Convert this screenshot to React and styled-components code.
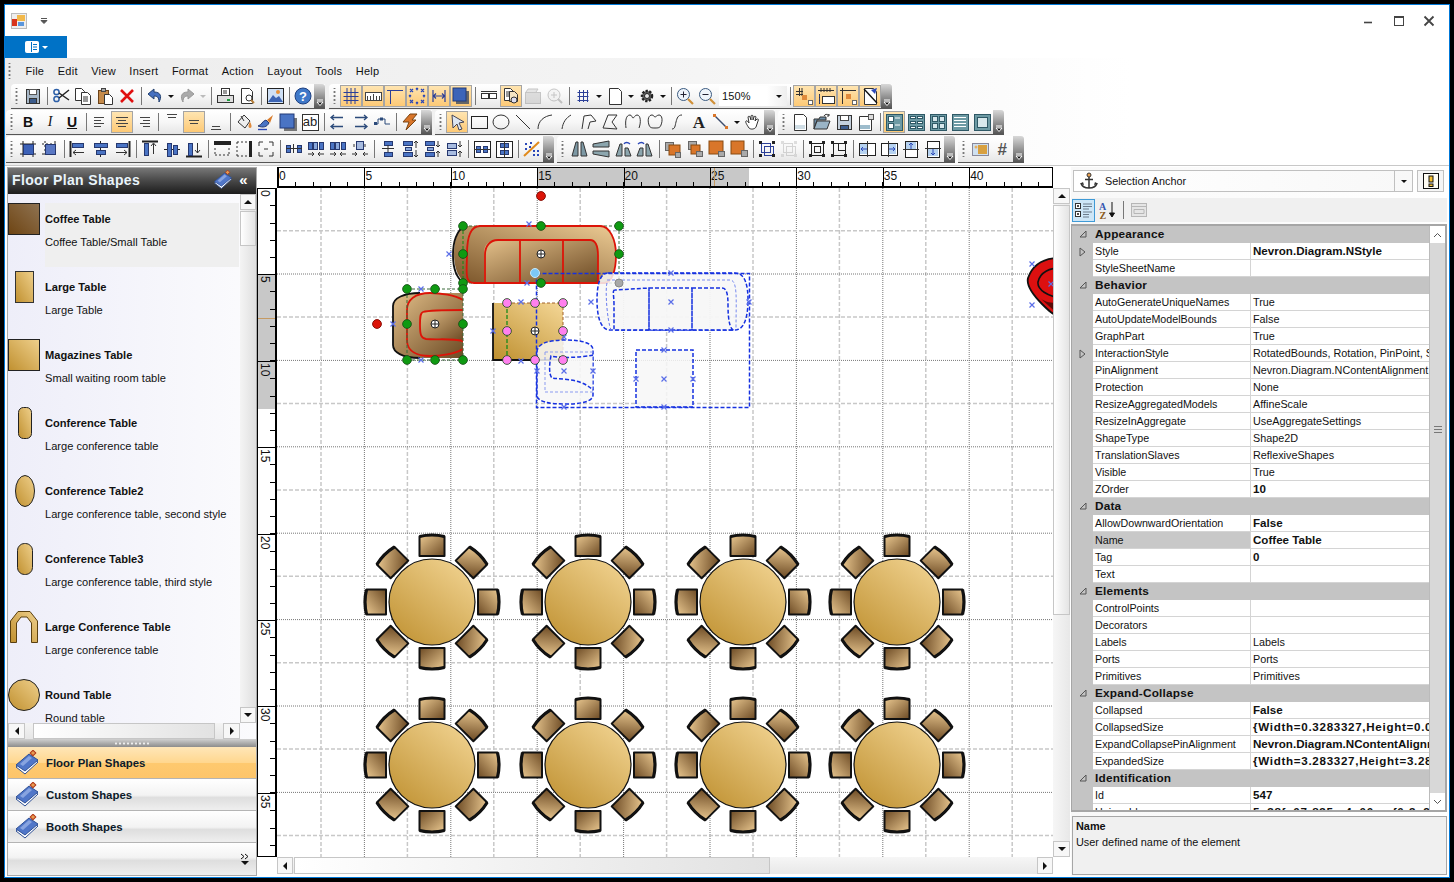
import React from "react";
import styled, { createGlobalStyle } from "styled-components";

const GlobalStyle = createGlobalStyle`
  html, body { margin: 0; padding: 0; background: #000; overflow: hidden; }
  * { box-sizing: border-box; }
  body { font-family: "Liberation Sans", Arial, sans-serif; font-size: 11px; color: #111; }
`;

const Screen = styled.div`
  width: 1454px;
  height: 882px;
  padding: 4px 4px 4px 4px;
  background: #000;
`;

const Frame = styled.div`
  height: 100%;
  display: flex;
  flex-direction: column;
  background: #fff;
  border: 1px solid #0078d7;
`;

const TitleBar = styled.div`
  height: 31px;
  display: flex;
  align-items: center;
  padding: 0 5px 0 6px;
  flex: none;
`;

const WinButtons = styled.div`
  margin-left: auto;
  display: flex;
`;

const WinButton = styled.div`
  width: 30px;
  height: 20px;
  display: flex;
  align-items: center;
  justify-content: center;
`;

const AppTab = styled.div`
  width: 62px;
  height: 22px;
  background: #0072c6;
  display: flex;
  align-items: center;
  justify-content: center;
  gap: 3px;
  flex: none;
`;

const ToolArea = styled.div`
  flex: none;
  height: 108px;
  background: linear-gradient(to right, #ececec, #f4f4f4 45%, #fff 78%);
  border-bottom: 1px solid #c8c8c8;
`;

const MenuBar = styled.div`
  height: 26px;
  display: flex;
  align-items: center;
  gap: 13.5px;
  padding-left: 1px;
  font-size: 11px;
  letter-spacing: 0.25px;
`;

const Grip = styled.span`
  width: ${(p) => p.$w || 10}px;
  height: 16px;
  flex: none;
  background: radial-gradient(circle at 50% 50%, #777 0 1px, transparent 1.2px) center / 3px 4px repeat-y;
`;

const ToolRow = styled.div`
  height: ${(p) => p.$h}px;
  display: flex;
  padding-left: ${(p) => p.$pad}px;
  gap: ${(p) => p.$gap || 3}px;
`;

const Toolbar = styled.div`
  height: calc(100% - 1px);
  display: flex;
  align-items: center;
  background: linear-gradient(to bottom, #fff, #f7f7f7 50%, #e6e6e6);
  border-bottom: 1px solid #555;
  border-radius: 4px 0 0 0;
`;

const Cap = styled.div`
  width: 11px;
  height: 100%;
  flex: none;
  background: linear-gradient(to bottom, #d8d8d8, #555);
  border-radius: 0 3px 0 0;
  display: flex;
  align-items: flex-end;
  justify-content: center;
  padding-bottom: 2px;
`;

const ToolButton = styled.div`
  width: ${(p) => p.$w || 22}px;
  height: 22px;
  flex: none;
  display: flex;
  align-items: center;
  justify-content: center;
  opacity: ${(p) => (p.$off ? 0.45 : 1)};
  ${(p) =>
    p.$on &&
    `background: linear-gradient(to bottom, #ffe6b4, #fdc873);
     box-shadow: inset 0 0 0 1px #a5a5a5;`}
`;

const ToolSep = styled.span`
  width: 6px;
  height: 18px;
  flex: none;
  background: linear-gradient(#777, #777) center / 1px 100% no-repeat;
`;

const CaretBox = styled.span`
  width: ${(p) => p.$w || 10}px;
  flex: none;
  display: flex;
  align-items: center;
  justify-content: center;
  margin-left: ${(p) => p.$ml || 0}px;
  &::before {
    content: "";
    border-left: 3px solid transparent;
    border-right: 3px solid transparent;
    border-top: 3px solid ${(p) => p.$c || "#111"};
  }
`;

const Zoom = styled.div`
  width: 68px;
  height: 20px;
  margin-left: 1px;
  flex: none;
  display: flex;
  align-items: center;
  justify-content: space-between;
  padding: 0 4px 0 3px;
  background: linear-gradient(to right, #fff 70%, #eee);
  letter-spacing: 0.1px;
  font-size: 11px;
`;

const Main = styled.div`
  flex: 1;
  min-height: 0;
  display: flex;
  padding: 1px 2px 1px 2px;
`;

/* left panel */
const LeftPanel = styled.div`
  width: 250px;
  flex: none;
  display: flex;
  flex-direction: column;
  border: 1px solid #aaa;
`;

const PanelHead = styled.div`
  height: 26px;
  flex: none;
  display: flex;
  align-items: center;
  padding: 0 8px 3px 4px;
  background: linear-gradient(to bottom, #777, #4b4b4b 45%, #1c1c1c);
  color: #e9f4fb;
  font-weight: bold;
  font-size: 14px;
  letter-spacing: 0.35px;
  gap: 6px;
`;

const PanelTitle = styled.span`
  flex: 1;
`;

const Chevrons = styled.span`
  color: #fff;
  font-size: 15px;
  line-height: 1;
`;

const ListWrap = styled.div`
  height: 545px;
  flex: none;
  display: grid;
  grid-template-columns: 1fr 16px;
  grid-template-rows: 1fr 16px;
  background: linear-gradient(to right, #eeeef9, #fbfbfd);
`;

const List = styled.div`
  overflow: hidden;
  padding-top: 9px;
`;

const Item = styled.div`
  height: 68px;
  display: flex;
`;

const Thumb = styled.div`
  width: 37px;
  height: 64px;
  flex: none;
  svg {
    display: block;
    margin: -1px 0 0 -1.5px;
  }
`;

const ItemBody = styled.div`
  width: 194px;
  height: 64px;
  padding: 9px 0 0 0;
  background: ${(p) => (p.$sel ? "#efefef" : "transparent")};
`;

const ItemTitle = styled.div`
  font-weight: bold;
  height: 23px;
  line-height: 14px;
  font-size: 11.1px;
`;

const ItemText = styled.div`
  line-height: 14px;
  font-size: 11.1px;
  white-space: nowrap;
`;

const VBar = styled.div`
  display: flex;
  flex-direction: column;
  justify-content: flex-start;
  background: linear-gradient(to right, #f4f4f4, #dfdfdf);
`;

const HBar = styled.div`
  display: flex;
  align-items: stretch;
  background: linear-gradient(to bottom, #f4f4f4, #e6e6e6);
`;

const ArrowBtn = styled.div`
  width: ${(p) => p.$w || 16}px;
  height: ${(p) => p.$h || 16}px;
  flex: none;
  display: flex;
  align-items: center;
  justify-content: center;
  background: #f7f7f7;
  border: 1px solid #c6c6c6;
  margin-top: ${(p) => (p.$end ? "auto" : 0)};
  margin-left: ${(p) => (p.$endX ? "auto" : 0)};
`;

const Tri = styled.span`
  width: 0;
  height: 0;
  border: 4px solid transparent;
  ${(p) => (p.$d === "up" ? "border-bottom: 4px solid #111; border-top: 0;" : "")}
  ${(p) => (p.$d === "down" ? "border-top: 4px solid #111; border-bottom: 0;" : "")}
  ${(p) => (p.$d === "left" ? "border-right: 4px solid #111; border-left: 0;" : "")}
  ${(p) => (p.$d === "right" ? "border-left: 4px solid #111; border-right: 0;" : "")}
`;

const VThumb = styled.div`
  height: ${(p) => p.$h}px;
  flex: none;
  margin-top: 1px;
  background: linear-gradient(to right, #fff, #e4e4e4);
  border: 1px solid #c6c6c6;
`;

const HThumb = styled.div`
  width: ${(p) => p.$w}px;
  flex: none;
  margin-left: ${(p) => p.$ml || 1}px;
  background: linear-gradient(to right, #fff, #e2e2e2);
  border: 1px solid #c6c6c6;
`;

const Splitter = styled.div`
  height: 8px;
  flex: none;
  display: flex;
  align-items: center;
  justify-content: center;
  background: linear-gradient(to bottom, #d0d0d0, #8c8c8c);
  &::before {
    content: "";
    width: 36px;
    height: 3px;
    background: radial-gradient(circle, #eee 0 1px, transparent 1.2px) 0 0 / 4px 3px repeat-x;
  }
`;

const NavButton = styled.div`
  height: 32px;
  flex: none;
  display: flex;
  align-items: center;
  padding-left: 6px;
  gap: 6px;
  font-weight: bold;
  font-size: 11.4px;
  color: #0c1a2a;
  border-bottom: 1px solid #b4b4b4;
  background: ${(p) =>
    p.$on
      ? "linear-gradient(to bottom, #ffe6b8, #ffd78f 50%, #e9a95a 50%, #fec96f 53%, #fdc56a)"
      : "linear-gradient(to bottom, #fff, #f3f3f3 52%, #dedede 60%, #efefef)"};
`;

const NavFoot = styled.div`
  flex: 1;
  display: flex;
  justify-content: flex-end;
  align-items: flex-end;
  padding: 0 6px 10px 0;
  background: linear-gradient(to bottom, #fff, #f3f3f3 45%, #dedede 55%, #efefef);
`;

/* center */
const Center = styled.div`
  width: 813px;
  flex: none;
  display: grid;
  grid-template-columns: 20px 776px 17px;
  grid-template-rows: 21px 669px 17px;
`;

const TopRuler = styled.div`
  grid-column: 2;
  display: flex;
  overflow: hidden;
  border: 1px solid #000;
  border-bottom-width: 2px;
`;

const SideRuler = styled.div`
  grid-column: 1;
  display: flex;
  flex-direction: column;
  overflow: hidden;
  border: 1px solid #000;
  border-right-width: 2px;
  border-top: 0;
`;

const TopCell = styled.div`
  width: 86.4px;
  flex: none;
  position: relative;
  border-left: 1px solid #000;
  padding-left: 0;
  line-height: 16px;
  font-size: 12px;
  background:
    repeating-linear-gradient(to right, transparent 0 16.3px, #000 16.3px 17.28px) left bottom / 100% 4px no-repeat,
    linear-gradient(to right, #c8c8c8 ${(p) => p.$fill || 0}%, #fff ${(p) => p.$fill || 0}%);
`;

const SideCell = styled.div`
  height: 86.4px;
  flex: none;
  position: relative;
  border-top: 1px solid #000;
  writing-mode: vertical-rl;
  padding: 1px 4px 0 0;
  line-height: 12px;
  font-size: 12px;
  background:
    repeating-linear-gradient(to bottom, transparent 0 16.3px, #000 16.3px 17.28px) right top / 5px 100% no-repeat,
    linear-gradient(to bottom, #c8c8c8 ${(p) => p.$fill || 0}%, #fff ${(p) => p.$fill || 0}%);
`;

const TopMark = styled.i`
  position: absolute;
  top: 0;
  bottom: 0;
  left: ${(p) => p.$at}px;
  width: 1px;
  background: #c59a62;
`;

const SideMark = styled.i`
  position: absolute;
  left: 0;
  right: 0;
  top: ${(p) => p.$at}px;
  height: 1px;
  background: #c59a62;
`;

const Canvas = styled.div`
  grid-column: 2;
  background: #fff;
  overflow: hidden;
  svg { display: block; }
`;

const BarV = styled.div`
  grid-column: 3;
  display: flex;
  flex-direction: column;
  background: linear-gradient(to right, #f6f6f6, #e8e8e8);
`;

const BarH = styled.div`
  grid-column: 2;
  display: flex;
  background: linear-gradient(to bottom, #f6f6f6, #e8e8e8);
`;

/* right panel */
const RightPanel = styled.div`
  width: 378px;
  flex: none;
  margin-left: 1px;
  display: flex;
  flex-direction: column;
  padding: 3px 2px 1px 0;
  background: linear-gradient(to right, #f8f8f8, #fff);
`;

const Selector = styled.div`
  display: flex;
  gap: 4px;
  padding-left: 2px;
  height: 22px;
  flex: none;
`;

const Combo = styled.div`
  flex: 1;
  display: flex;
  align-items: center;
  border: 1px solid #c0c0c0;
  background: linear-gradient(to right, #fff, #f8f8f8);
  padding-left: 6px;
  font-size: 10.8px;
`;

const ComboText = styled.span`
  margin-left: 7px;
`;

const ComboArrow = styled.span`
  margin-left: auto;
  width: 18px;
  height: 100%;
  border-left: 1px solid #c0c0c0;
  display: flex;
  align-items: center;
  justify-content: center;
`;

const WarnBtn = styled.div`
  width: 27px;
  border: 1px solid #c0c0c0;
  margin-right: 3px;
  background: #f6f6f6;
  display: flex;
  align-items: center;
  justify-content: center;
`;

const GridTools = styled.div`
  height: 24px;
  margin: 6px 0 2px 1px;
  flex: none;
  display: flex;
  align-items: center;
  gap: 1px;
  background: #f0f0f0;
`;

const GridToolBtn = styled.div`
  width: 23px;
  height: 23px;
  display: flex;
  align-items: center;
  justify-content: center;
  opacity: ${(p) => (p.$off ? 0.55 : 1)};
  ${(p) => p.$on && "background:#cde6f7; border:1px solid #3f9ad6;"}
`;

const PropGrid = styled.div`
  height: 588px;
  flex: none;
  display: flex;
  border: 2px solid #a6a6a6;
  border-width: 2px 2px 2px 1px;
  overflow: hidden;
  background: #c4c4c4;
`;

const PropRows = styled.div`
  width: 357px;
  flex: none;
  overflow: hidden;
`;

const CatRow = styled.div`
  height: 17px;
  display: flex;
  align-items: center;
  padding-bottom: 2px;
  background: #c4c4c4;
  font-weight: bold;
  font-size: 11.8px;
  letter-spacing: 0.2px;
`;

const CatLabel = styled.span`
  padding-left: 2px;
`;

const Gutter = styled.span`
  width: 21px;
  flex: none;
  height: 100%;
  display: flex;
  align-items: center;
  justify-content: center;
`;

const PropRow = styled.div`
  height: 17px;
  display: flex;
  background: #c4c4c4;
`;

const PropName = styled.div`
  width: 158px;
  flex: none;
  padding-left: 2px;
  line-height: 17px;
  font-size: 10.7px;
  white-space: nowrap;
  overflow: hidden;
  background: ${(p) => (p.$sel ? "#c8c8c8" : "#fff")};
  border-right: 1px solid #d4d4d4;
  border-bottom: 1px solid #d4d4d4;
`;

const PropValue = styled.div`
  flex: 1;
  min-width: 0;
  padding-left: 2px;
  line-height: ${(p) => (p.$b ? 16 : 17)}px;
  font-size: ${(p) => (p.$b ? 11.6 : 10.8)}px;
  font-weight: ${(p) => (p.$b ? "bold" : "normal")};
  letter-spacing: ${(p) => (p.$wide ? "0.7px" : "0")};
  white-space: nowrap;
  overflow: hidden;
  background: #fff;
  border-bottom: 1px solid #d4d4d4;
`;

const GridScroll = styled.div`
  flex: 1;
  display: flex;
  flex-direction: column;
  background: #d8d8d8;
  border-left: 1px solid #bbb;
`;

const ChevBtn = styled.div`
  height: 17px;
  flex: none;
  background: #fff;
  display: flex;
  align-items: center;
  justify-content: center;
  margin-top: ${(p) => (p.$end ? "auto" : 0)};
`;

const GridGrip = styled.div`
  margin: 183px auto 0;
  width: 8px;
  height: 7px;
  border-top: 1px solid #777;
  border-bottom: 1px solid #777;
  background: linear-gradient(#777, #777) center / 100% 1px no-repeat;
`;

const HelpPane = styled.div`
  flex: 1;
  margin: 4px 0 0 1px;
  background: #f0f0f0;
  border: 1px solid #a6a6a6;
  padding: 1px 3px;
  line-height: 16px;
  font-size: 10.9px;
`;

const HelpTitle = styled.div`
  font-weight: bold;
`;

/* icons are drawn on an 18x18 box */
const L = ({ d, c = "#333", w = 1, dash }) => (
  <path d={d} stroke={c} strokeWidth={w} strokeDasharray={dash} fill="none" />
);
const R = ({ x, y, w, h, f = "#4a74c4", c = "#26386f" }) => (
  <rect x={x + 0.5} y={y + 0.5} width={w} height={h} fill={f} stroke={c} />
);
const Page = ({ x = 3, y = 1, w = 11, h = 15, f = "#fff" }) => (
  <path d={`M${x + 0.5} ${y + 0.5}h${w - 3}l3 3v${h - 3}h-${w}z`} fill={f} stroke="#333" />
);
const HS = "M3.5 5.5h11M3.5 9.5h11M3.5 13.5h11M5.5 3v12M9.5 3v12M13.5 3v12";
const CORNERS = "M1 1h3v3H1zM14 1h3v3h-3zM1 14h3v3H1zM14 14h3v3h-3z";

const ICONS = {
  save: <><R x={2} y={2} w={13} h={14} f="#a8b8c8" c="#333" /><R x={5} y={2} w={7} h={5} f="#fff" c="#555" /><R x={5} y={11} w={7} h={5} f="#3c5c8c" c="#333" /></>,
  cut: <><circle cx="4.5" cy="12" r="2.6" fill="none" stroke="#2c5fa8" strokeWidth="1.5" /><circle cx="4.5" cy="5" r="2.6" fill="none" stroke="#2c5fa8" strokeWidth="1.5" /><L d="M7 6L17 13M7 11L17 3" c="#222" w="1.5" /></>,
  copy: <><Page x={1} y={1} w={9} h={12} /><Page x={7} y={5} w={9} h={12} /><L d="M9 10h5M9 12h5M9 14h5" /></>,
  paste: <><R x={2} y={3} w={10} h={13} f="#c48a4a" c="#6b4218" /><R x={5} y={1} w={4} h={3} f="#aaa" c="#444" /><Page x={8} y={7} w={8} h={10} /></>,
  del: <L d="M3 3L15 15M15 3L3 15" c="#e01010" w="2.6" />,
  undo: <path d="M8 2L2 7l6 5V9c3 0 5 1 5 6 3-5 2-10-5-10z" fill="#4670c0" stroke="#22406f" />,
  redo: <path d="M10 2l6 5-6 5V9c-3 0-5 1-5 6-3-5-2-10 5-10z" fill="#aaa" stroke="#999" />,
  print: <><R x={5} y={1} w={8} h={7} f="#fff" c="#333" /><R x={1} y={8} w={16} h={7} f="#ddd" c="#333" /><rect x="11" y="12" width="3" height="2" fill="#1ca03c" /><L d="M7 4h4M7 6h4" /></>,
  preview: <><Page x={3} y={1} w={11} h={15} /><circle cx="11" cy="11" r="3" fill="#fff" stroke="#333" /><L d="M13 13l3 3" c="#b8803a" w="2" /></>,
  picture: <><R x={1} y={1} w={16} h={15} f="#cfe0f5" c="#222" /><circle cx="12" cy="5" r="2" fill="#e8923a" /><path d="M2 15l5-7 3 3 3-2 4 6z" fill="#3c64b4" /></>,
  help: <><circle cx="9" cy="9" r="8" fill="#3f78c8" stroke="#1d3f80" /><text x="9" y="13.5" textAnchor="middle" fill="#fff" fontWeight="bold" fontSize="13" fontFamily="Liberation Sans">?</text></>,
  grid: <L d="M1.5 5.5h15M1.5 9.5h15M1.5 13.5h15M5 1v16M9 1v16M13 1v16" c="#2b3f98" />,
  ruler: <><R x={1} y={5} w={16} h={8} f="#fff" c="#444" /><L d="M3.5 13V9M6.5 13V9M9.5 13V7M12.5 13V9M15.5 13V9" c="#444" /></>,
  guides: <L d="M1 3.5h16M4.5 3v14" c="#2b3f98" />,
  snap: <path d="M2 2l3 3M5 2L2 5M13 2l3 3M16 2l-3 3M2 13l3 3M5 13l-3 3M13 13l3 3M16 13l-3 3M8 1l2 2M10 1L8 3M8 15l2 2M10 15l-2 2M1 8l2 2M3 8l-2 2M15 8l2 2M17 8l-2 2" stroke="#2b48b8" fill="none" strokeWidth="1.2" />,
  arrows: <L d="M3 3v12M15 3v12M3.5 9h11M6 6.5L3.5 9 6 11.5M12 6.5l2.5 2.5-2.5 2.5" c="#2b3f98" w="1.2" />,
  shadow: <><rect x="4" y="4" width="13" height="13" fill="#666" /><rect x="1" y="1" width="13" height="13" fill="#3c64b8" stroke="#223a78" /></>,
  rects: <><R x={1} y={6} w={7} h={5} f="#fff" c="#333" /><R x={9} y={6} w={7} h={5} f="#fff" c="#333" /><L d="M1 4.5h16" /></>,
  pagezoom: <><Page x={2} y={1} w={9} h={12} /><L d="M4 5h5M4 7h5M4 9h5" /><Page x={7} y={4} w={8} h={10} f="#f4e4c4" /><circle cx="12" cy="13" r="3" fill="#dde" stroke="#333" /></>,
  offpage: <><R x={1} y={5} w={15} h={11} f="#bbb" c="#888" /><path d="M2 5l2-3h10l-2 3" fill="#ccc" stroke="#888" /></>,
  offzoom: <><circle cx="8" cy="8" r="6" fill="#eee" stroke="#888" /><L d="M5 8h6M8 5v6" c="#888" /><L d="M12 12l4 4" c="#888" w="2" /></>,
  hash: <L d={HS} c="#2b3f98" />,
  page: <Page x={3} y={1} w={12} h={16} />,
  gear: <><circle cx="9" cy="9" r="5" fill="#666" stroke="#222" strokeWidth="2.5" strokeDasharray="2.2 1.4" /><circle cx="9" cy="9" r="2.5" fill="#e8e8e8" stroke="#222" /></>,
  zin: <><circle cx="7.5" cy="7.5" r="6" fill="#eef4fb" stroke="#3a5a80" /><L d="M4.5 7.5h6M7.5 4.5v6" c="#223" /><L d="M12 12l5 5" c="#d09038" w="2.2" /></>,
  zout: <><circle cx="7.5" cy="7.5" r="6" fill="#eef4fb" stroke="#3a5a80" /><L d="M4.5 7.5h6" c="#223" /><L d="M12 12l5 5" c="#d09038" w="2.2" /></>,
  v1: <><L d="M1 4.5h7M4.5 1v8M1 7.5h7M7 1v8" c="#333" /><rect x="7" y="8" width="5" height="5" fill="#e08a3c" /><R x={13} y={13} w={4} h={4} f="#fff" c="#666" /></>,
  v2: <><L d="M1 3.5h16M4 1v4M7 1v4M10 1v4M13 1v4M2.5 7v10" c="#333" /><L d="M2 9h1M2 12h1M2 15h1" c="#2b48b8" /><R x={5} y={9} w={12} h={7} f="#fff" c="#333" /></>,
  v3: <><L d="M1 3.5h16M3.5 1v16" c="#333" /><rect x="7" y="7" width="5" height="5" fill="#e08a3c" /><R x={13} y={13} w={4} h={4} f="#fff" c="#666" /></>,
  v4: <><Page x={3} y={1} w={12} h={16} /><L d="M3 2l13 14" c="#111" w="1.4" /><path d="M10 3l6-2-2 6z" fill="#2b48b8" /></>,
  alignL: <L d="M3 4.5h10M3 7.5h7M3 10.5h10M3 13.5h7" c="#444" />,
  alignC: <L d="M3 4.5h12M5 7.5h8M3 10.5h12M5 13.5h8" c="#444" />,
  alignR: <L d="M5 4.5h10M8 7.5h7M5 10.5h10M8 13.5h7" c="#444" />,
  vTop: <L d="M4 1.5h10M5 4.5h8" c="#444" />,
  vMid: <L d="M4 7.5h10M5 10.5h8" c="#444" />,
  vBot: <L d="M5 13.5h8M4 16.5h10" c="#444" />,
  fill: <><path d="M3 9l6-7 6 6-5 7z" fill="#eee" stroke="#333" /><path d="M15 9c2 3 2 6 0 6s-2-3 0-6z" fill="#e08a3c" /><L d="M6 3l3 5" /></>,
  pen: <><path d="M1 13c4-1 4-5 8-6l3 3c-2 4-6 5-11 3z" fill="#4a74c4" stroke="#26386f" /><path d="M10 7l6-5-3 8z" fill="#d87c2c" /><L d="M1 16.5h9" c="#2b48b8" w="1.4" /></>,
  shadow2: <><rect x="5" y="5" width="13" height="13" fill="#777" /><rect x="1" y="1" width="14" height="14" fill="#4a74c4" stroke="#223a78" /></>,
  ab: <><R x={1} y={1} w={16} h={16} f="#fff" c="#333" /><text x="9" y="13" textAnchor="middle" fontSize="13" fontFamily="Liberation Sans" fill="#222">ab</text></>,
  arrowsL: <L d="M2 4.5h12M2 13.5h12M5 2L2 4.5 5 7M5 11l-3 2.5L5 16" c="#2b4a7a" w="1.3" />,
  arrowsR: <L d="M4 4.5h12M4 13.5h12M13 2l3 2.5L13 7M13 11l3 2.5L13 16" c="#2b4a7a" w="1.3" />,
  conn: <><L d="M1 11h4V6h7v5h5" c="#2b4a7a" /><rect x="1" y="9" width="3" height="3" fill="#2b4a7a" /><rect x="7" y="4.5" width="3" height="3" fill="#2b4a7a" /></>,
  bolt: <path d="M9 1h7l-5 6h4L5 17l3-8H2z" fill="#d9762a" stroke="#7a4412" />,
  pointer: <path d="M4 2l12 7-5 1 3 6-3 1-2-6-4 4z" fill="#dde6f2" stroke="#445" />,
  rect: <R x={1} y={3} w={16} h={12} f="none" c="#222" />,
  ellipse: <ellipse cx="9" cy="9" rx="8" ry="7" fill="none" stroke="#333" />,
  line: <L d="M2 2L16 16" />,
  arc1: <L d="M2 16C2 8 8 3 16 2" />,
  arc2: <L d="M4 16C5 9 8 5 13 2" />,
  poly1: <L d="M2 16L4 3 11 2 16 8 10 9 8 16" />,
  poly2: <L d="M1 15L6 2 15 2 10 9 15 16z" />,
  curve1: <L d="M2 15C1 8 2 2 6 2c2 0 2 3 3 3s2-3 4-3c4 0 4 8 2 13" />,
  curve2: <L d="M3 12C1 6 3 2 6 2c2 0 2 2 3 2s2-2 4-2c3 0 4 5 2 10-1 3-3 3-6 3s-5 0-6-3z" />,
  bezier: <L d="M4 16c3 0 3-3 4-7s2-7 6-7" />,
  letterA: <text x="9" y="15" textAnchor="middle" fontSize="17" fontWeight="bold" fontFamily="Liberation Serif" fill="#222">A</text>,
  connector: <><L d="M3 3L15 15" c="#3c4c6c" w="1.4" /><rect x="1" y="1" width="3" height="3" fill="#d9762a" /><rect x="13" y="13" width="3" height="3" fill="#d9762a" /></>,
  hand: <path d="M5 15C3 12 1 9 2 8s2 1 3 2L4 4c0-1 2-1 2 0l1 3V3c0-1 2-1 2 0v4l1-3c0-1 2-1 2 0l-1 4 2-2c1 0 2 0 1 2l-2 6c-1 2-5 3-7 1z" fill="#fff" stroke="#333" />,
  newPage: <><Page x={3} y={1} w={12} h={16} f="#fff" /><rect x="4" y="12" width="10" height="4" fill="#cfdde5" /></>,
  open: <><path d="M1 6h5l1-2h6v3H4L1 16z" fill="#6d8ea8" stroke="#333" /><path d="M4 8h13l-3 8H1z" fill="#9ab4c6" stroke="#333" /><L d="M11 3c1-2 3-2 5-1M16 1v2h-2" /></>,
  savePage: <><R x={2} y={2} w={14} h={14} f="#c4d0dc" c="#333" /><R x={5} y={2} w={8} h={5} f="#fff" c="#444" /><R x={5} y={12} w={8} h={4} f="#3c5c8c" c="#333" /></>,
  pageX: <><Page x={2} y={3} w={12} h={14} /><rect x="3" y="12" width="10" height="4" fill="#9dbccc" /><R x={11} y={1} w={5} h={5} f="#ddd" c="#555" /></>,
  view1: <><R x={1} y={1} w={16} h={16} f="#6d9aa4" c="#2f5966" /><R x={3} y={3} w={5} h={5} f="#fff" c="#2f5966" /><R x={3} y={10} w={5} h={5} f="#fff" c="#2f5966" /><L d="M10 5h5M10 12h5" c="#fff" /></>,
  view2: <><R x={1} y={1} w={16} h={16} f="#6d9aa4" c="#2f5966" /><R x={3} y={3} w={5} h={2} f="#fff" c="#2f5966" /><R x={10} y={3} w={5} h={2} f="#fff" c="#2f5966" /><R x={3} y={8} w={5} h={2} f="#fff" c="#2f5966" /><R x={10} y={8} w={5} h={2} f="#fff" c="#2f5966" /><R x={3} y={13} w={5} h={2} f="#fff" c="#2f5966" /><R x={10} y={13} w={5} h={2} f="#fff" c="#2f5966" /></>,
  view3: <><R x={1} y={1} w={16} h={16} f="#6d9aa4" c="#2f5966" /><R x={3} y={3} w={5} h={5} f="#d8e8ec" c="#2f5966" /><R x={10} y={3} w={5} h={5} f="#d8e8ec" c="#2f5966" /><R x={3} y={10} w={5} h={5} f="#d8e8ec" c="#2f5966" /><R x={10} y={10} w={5} h={5} f="#d8e8ec" c="#2f5966" /></>,
  view4: <><R x={1} y={1} w={16} h={16} f="#6d9aa4" c="#2f5966" /><L d="M3 4.5h12M3 7.5h12M3 10.5h12M3 13.5h12" c="#fff" /></>,
  view5: <><R x={1} y={1} w={16} h={16} f="#6d9aa4" c="#2f5966" /><R x={4} y={4} w={10} h={10} f="#d8e8ec" c="#2f5966" /></>,
  sizeA: <><L d="M1 4h16M1 14h16M4 1v16M14 1v16" c="#222" /><R x={4} y={4} w={10} h={10} f="#3d62b8" /></>,
  sizeB: <><L d="M1 4h16M1 14h16M4 1v16M14 1v16" c="#222" dash="2" /><R x={4} y={4} w={10} h={10} f="#5a78c4" /></>,
  alL: <><L d="M1.5 1v16" c="#222" w="2" /><R x={3} y={3} w={11} h={4} /><L d="M15 12.5H4M7 10l-3 2.5L7 15" /></>,
  alC: <><L d="M9.5 1v16" c="#222" /><R x={3} y={3} w={13} h={4} /><R x={5} y={10} w={9} h={4} /></>,
  alR: <><L d="M16.5 1v16" c="#222" w="2" /><R x={3} y={3} w={11} h={4} /><L d="M3 12.5h11M11 10l3 2.5-3 2.5" /></>,
  alT: <><L d="M1 1.5h16" c="#222" w="2" /><R x={3} y={3} w={4} h={12} /><L d="M12.5 4v10M10 6l2.5-3L15 6" /></>,
  alM: <><L d="M1 9.5h16" c="#222" /><R x={4} y={3} w={4} h={13} /><R x={10} y={5} w={4} h={9} /></>,
  alB: <><L d="M1 16.5h16" c="#222" w="2" /><R x={3} y={3} w={4} h={12} /><L d="M12.5 3v10M10 10l2.5 3 2.5-3" /></>,
  dsT: <><R x={1} y={1} w={16} h={3} f="#222" c="#222" /><L d="M2 15h14M2 8v7M16 8v7" c="#333" dash="2" /></>,
  dsM: <><L d="M2 2h10M2 2v14M2 16h10" c="#333" dash="2" /><rect x="14" y="1" width="3" height="16" fill="#222" /></>,
  dsB: <L d="M2 2h4M12 2h4M2 2v4M16 2v4M2 16h4M12 16h4M2 12v4M16 12v4M7 9h4" c="#333" />,
  spA: <><R x={1} y={5} w={4} h={7} /><R x={12} y={5} w={4} h={7} /><L d="M1 8.5h16M8.5 4v9" /></>,
  spB: <><R x={1} y={2} w={4} h={7} /><R x={12} y={2} w={4} h={7} /><R x={6} y={2} w={4} h={7} f="#8aa8dc" /><L d="M1 14h6M5 12l2 2-2 2M11 14h6M13 12l-2 2 2 2" /></>,
  spC: <><R x={1} y={2} w={4} h={7} /><R x={12} y={2} w={4} h={7} /><R x={6} y={2} w={4} h={7} f="#8aa8dc" /><L d="M1 14h6M5 12l2 2-2 2M17 14h-6M13 12l-2 2 2 2" /></>,
  spD: <><R x={5} y={1} w={7} h={8} f="#a8bce0" /><L d="M3 4v3M14 4v3" /><L d="M1 14h5M4 12l2 2-2 2M17 14h-5M14 12l-2 2 2 2" /></>,
  vsA: <><R x={5} y={1} w={8} h={4} /><R x={5} y={12} w={8} h={4} /><L d="M3 8.5h12M9 5v7" /></>,
  vsB: <><R x={2} y={1} w={9} h={4} /><R x={2} y={12} w={9} h={4} /><R x={4} y={7} w={6} h={3} f="#8aa8dc" /><L d="M15 1v7M13 3l2-2 2 2M15 10v7M13 15l2 2 2-2" /></>,
  vsC: <><R x={2} y={1} w={9} h={4} /><R x={2} y={12} w={9} h={4} /><R x={4} y={7} w={6} h={3} f="#8aa8dc" /><L d="M15 1v6M13 5l2 2 2-2M15 17v-6M13 13l2-2 2 2" /></>,
  vsD: <><R x={2} y={3} w={9} h={5} f="#a8bce0" /><R x={2} y={10} w={9} h={5} f="#a8bce0" /><L d="M15 1v6M13 5l2 2 2-2M15 17v-6M13 13l2-2 2 2" /></>,
  frA: <><R x={1} y={1} w={16} h={16} f="#fff" c="#222" /><R x={3} y={6} w={4} h={6} /><R x={10} y={6} w={4} h={6} /><L d="M1 9.5h16" /></>,
  frB: <><R x={1} y={1} w={16} h={16} f="#fff" c="#222" /><R x={5} y={3} w={8} h={4} /><R x={5} y={10} w={8} h={4} /><L d="M9.5 1v16" /></>,
  magic: <><L d="M1 16L16 2" c="#e08a1c" w="2" /><path d="M2 3h2v2H2zM7 2h2v2H7zM2 8h2v2H2zM10 10h2v2h-2zM14 10h2v2h-2zM10 14h2v2h-2zM14 14h2v2h-2zM6 6h2v2H6z" fill="#2b48b8" /></>,
  trA: <path d="M6 2L2 16h6V2zM11 2v14h6L13 2z" fill="#7c98a4" stroke="#333" />,
  trB: <path d="M1 4L17 1v6H1zM1 11h16v6L1 14z" fill="#8ca6ae" stroke="#333" />,
  trC: <><path d="M6 4L2 16h6V4zM11 8v8h6l-3-8z" fill="#8ca6ae" stroke="#333" /><L d="M10 4c1-2 4-2 6 0" c="#2b48b8" w="1.3" /></>,
  trD: <><path d="M12 4l4 12h-6V4zM7 8v8H1l3-8z" fill="#8ca6ae" stroke="#333" /><L d="M8 4c-1-2-4-2-6 0" c="#2b48b8" w="1.3" /></>,
  ordA: <><R x={1} y={2} w={8} h={8} f="#aaa" c="#666" /><rect x="5" y="5" width="11" height="10" fill="#d9762a" stroke="#884a10" /><R x={11} y={12} w={5} h={5} f="#aaa" c="#666" /></>,
  ordB: <><R x={2} y={1} w={8} h={8} f="#aaa" c="#666" /><rect x="5" y="5" width="9" height="9" fill="#d9762a" stroke="#884a10" /><R x={10} y={11} w={6} h={5} f="#aaa" c="#666" /></>,
  ordC: <><rect x="1" y="1" width="14" height="13" fill="#d9762a" stroke="#884a10" /><R x={10} y={11} w={6} h={5} f="#aaa" c="#666" /></>,
  ordD: <><rect x="1" y="1" width="13" height="13" fill="#d9762a" stroke="#884a10" /><R x={11} y={10} w={6} h={6} f="#aaa" c="#666" /></>,
  grpA: <><R x={3} y={3} w={9} h={9} f="none" c="#2b3f98" /><R x={6} y={6} w={9} h={9} f="none" c="#2b3f98" /><path d={CORNERS} fill="#222" /></>,
  grpB: <><R x={3} y={3} w={9} h={9} f="none" c="#aaa" /><R x={6} y={6} w={9} h={9} f="none" c="#aaa" /><path d={CORNERS} fill="#bbb" /></>,
  bxA: <><R x={3} y={3} w={12} h={12} f="none" c="#222" /><R x={6} y={6} w={6} h={6} f="none" c="#222" /><path d={CORNERS} fill="#222" /></>,
  bxB: <><R x={3} y={3} w={12} h={12} f="none" c="#222" /><R x={8} y={3} w={7} h={7} f="none" c="#222" /><path d={CORNERS} fill="#222" /></>,
  edL: <><R x={1} y={3} w={16} h={12} f="#fff" c="#222" /><rect x="2" y="4" width="7" height="10" fill="#b6d2f0" /><L d="M9 9H3M5 7L3 9l2 2" c="#2b48b8" /><L d="M9.5 1v16" c="#333" /></>,
  edR: <><R x={1} y={3} w={16} h={12} f="#fff" c="#222" /><rect x="9" y="4" width="7" height="10" fill="#b6d2f0" /><L d="M9 9h6M13 7l2 2-2 2" c="#2b48b8" /><L d="M8.5 1v16" c="#333" /></>,
  edT: <><R x={3} y={1} w={12} h={16} f="#fff" c="#222" /><rect x="4" y="2" width="10" height="7" fill="#b6d2f0" /><L d="M9 9V3M7 5l2-2 2 2" c="#2b48b8" /><L d="M1 9.5h16" c="#333" /></>,
  edB: <><R x={3} y={1} w={12} h={16} f="#fff" c="#222" /><rect x="4" y="9" width="10" height="7" fill="#b6d2f0" /><L d="M9 9v6M7 13l2 2 2-2" c="#2b48b8" /><L d="M1 8.5h16" c="#333" /></>,
  photo: <><R x={1} y={3} w={16} h={12} f="#cfe0f0" c="#889" /><rect x="7" y="5" width="9" height="9" fill="#d8a040" /><circle cx="5" cy="7" r="1.5" fill="#e8b060" /></>,
  pound: <text x="9" y="15" textAnchor="middle" fontSize="17" fontWeight="bold" fontStyle="italic" fontFamily="Liberation Sans" fill="#555">#</text>,
};

const Glyph = ({ name, size = 18 }) => (
  <svg width={size} height={size} viewBox="0 0 18 18">{ICONS[name]}</svg>
);

const BIU = styled.span`
  font-family: ${(p) => (p.$serif ? '"Liberation Serif", serif' : '"Liberation Sans", sans-serif')};
  font-weight: ${(p) => (p.$b ? "bold" : "normal")};
  font-style: ${(p) => (p.$i ? "italic" : "normal")};
  text-decoration: ${(p) => (p.$u ? "underline" : "none")};
  font-size: 14px;
`;

const renderItem = (it, i) => {
  if (it === "|") return <ToolSep key={i} />;
  if (it === "v") return <CaretBox key={i} />;
  if (it === "vd") return <CaretBox key={i} $c="#bbb" />;
  if (it === "B") return <ToolButton key={i}><BIU $b>B</BIU></ToolButton>;
  if (it === "I") return <ToolButton key={i}><BIU $i $serif>I</BIU></ToolButton>;
  if (it === "U") return <ToolButton key={i}><BIU $u $b>U</BIU></ToolButton>;
  if (it === "zoom") return <Zoom key={i}><span>150%</span><CaretBox $w={8} /></Zoom>;
  const [name, flag] = it.split(":");
  return (
    <ToolButton key={i} $on={flag === "a"} $off={flag === "d"}>
      <Glyph name={name} />
    </ToolButton>
  );
};

const TOOLBARS = [
  {
    h: 26,
    gap: 4,
    pad: 6,
    bars: [
      ["save", "|", "cut", "copy", "paste", "del", "|", "undo", "v", "redo", "vd", "|", "print", "preview", "|", "picture", "|", "help"],
      ["grid:a", "ruler:a", "guides:a", "snap:a", "arrows:a", "shadow:a", "|", "rects", "pagezoom:a", "offpage:d", "offzoom:d", "|", "hash", "v", "page", "v", "gear", "v", "|", "zin", "zout", "zoom", "|", "v1:a", "v2:a", "v3:a", "v4:a"],
    ],
  },
  {
    h: 26,
    gap: 3,
    pad: 1,
    bars: [
      ["B", "I", "U", "|", "alignL", "alignC:a", "alignR", "|", "vTop", "vMid:a", "vBot", "|", "fill", "pen", "shadow2", "ab", "|", "arrowsL", "arrowsR", "conn", "|", "bolt"],
      ["pointer:a", "rect", "ellipse", "line", "arc1", "arc2", "poly1", "poly2", "curve1", "curve2", "bezier", "letterA", "connector", "v", "hand"],
      ["newPage", "open", "savePage", "pageX", "|", "view1:a", "view2", "view3", "view4", "view5"],
    ],
  },
  {
    h: 28,
    gap: 3,
    pad: 1,
    bars: [
      ["sizeA", "sizeB", "|", "alL", "alC", "alR", "|", "alT", "alM", "alB", "|", "dsT", "dsM", "dsB", "|", "spA", "spB", "spC", "spD", "|", "vsA", "vsB", "vsC", "vsD", "|", "frA", "frB", "|", "magic"],
      ["trA", "trB", "trC", "trD", "|", "ordA", "ordB", "ordC", "ordD", "|", "grpA", "grpB:d", "|", "bxA", "bxB", "|", "edL", "edR", "edT", "edB"],
      ["photo", "pound"],
    ],
  },
];

const MENU = ["File", "Edit", "View", "Insert", "Format", "Action", "Layout", "Tools", "Help"];

const SHAPES = [
  ["Coffee Table", "Coffee Table/Small Table", "coffee"],
  ["Large Table", "Large Table", "large"],
  ["Magazines Table", "Small waiting room table", "mag"],
  ["Conference Table", "Large conference table", "conf"],
  ["Conference Table2", "Large conference table, second style", "conf2"],
  ["Conference Table3", "Large conference table, third style", "conf3"],
  ["Large Conference Table", "Large conference table", "arch"],
  ["Round Table", "Round table", "round"],
];

const ThumbArt = ({ kind }) => {
  const id = `th-${kind}`;
  const dark = kind === "coffee";
  return (
    <svg width="34" height="34" viewBox="0 0 34 34">
      <defs>
        <linearGradient id={id} x1="0" y1="1" x2="1" y2="0">
          <stop offset="0" stopColor={dark ? "#6e4412" : "#c0902f"} />
          <stop offset="1" stopColor={dark ? "#8f7352" : "#efd08c"} />
        </linearGradient>
      </defs>
      {(kind === "coffee" || kind === "mag") && <rect x="1.5" y="1.5" width="31" height="31" fill={`url(#${id})`} stroke="#222" />}
      {kind === "large" && <rect x="8.5" y="1.5" width="18" height="31" fill={`url(#${id})`} stroke="#333" />}
      {kind === "conf" && <rect x="11.5" y="1.5" width="13" height="31" rx="5" fill={`url(#${id})`} stroke="#222" />}
      {kind === "conf2" && <ellipse cx="18" cy="17" rx="9.5" ry="15.5" fill={`url(#${id})`} stroke="#222" />}
      {kind === "conf3" && <rect x="10.5" y="1.5" width="15" height="31" rx="7" fill={`url(#${id})`} stroke="#222" />}
      {kind === "arch" && <path d="M3.5 32.5V11L11 1.5h12L30.5 11v21.5h-6V13L20 7h-6l-4.5 6v19.5z" fill={`url(#${id})`} stroke="#5a4010" />}
      {kind === "round" && <circle cx="17" cy="17" r="15.5" fill={`url(#${id})`} stroke="#222" />}
    </svg>
  );
};

const Book = ({ size = 26 }) => (
  <svg width={size} height={size} viewBox="0 0 26 26">
    <path d="M2 17L15 6l9 6L11 24z" fill="#fff" stroke="#2d4f95" />
    <path d="M2 15L15 4l9 6L11 21z" fill="#5076c8" stroke="#2d4f95" />
    <path d="M6 14L15 6l3 2-9 8z" fill="#88a4e0" />
    <rect x="17" y="1" width="4" height="4" fill="#e89a50" stroke="#b03818" transform="rotate(45 19 3)" />
  </svg>
);

const NAV = [["Floor Plan Shapes", true], ["Custom Shapes"], ["Booth Shapes"]];

const PROPS = [
  ["c", "Appearance"],
  ["Style", "Nevron.Diagram.NStyle", "b", "exp"],
  ["StyleSheetName", ""],
  ["c", "Behavior"],
  ["AutoGenerateUniqueNames", "True"],
  ["AutoUpdateModelBounds", "False"],
  ["GraphPart", "True"],
  ["InteractionStyle", "RotatedBounds, Rotation, PinPoint, Stretch", "", "exp"],
  ["PinAlignment", "Nevron.Diagram.NContentAlignment"],
  ["Protection", "None"],
  ["ResizeAggregatedModels", "AffineScale"],
  ["ResizeInAggregate", "UseAggregateSettings"],
  ["ShapeType", "Shape2D"],
  ["TranslationSlaves", "ReflexiveShapes"],
  ["Visible", "True"],
  ["ZOrder", "10", "b"],
  ["c", "Data"],
  ["AllowDownwardOrientation", "False", "b"],
  ["Name", "Coffee Table", "b", "sel"],
  ["Tag", "0", "b"],
  ["Text", ""],
  ["c", "Elements"],
  ["ControlPoints", ""],
  ["Decorators", ""],
  ["Labels", "Labels"],
  ["Ports", "Ports"],
  ["Primitives", "Primitives"],
  ["c", "Expand-Collapse"],
  ["Collapsed", "False", "b"],
  ["CollapsedSize", "{Width=0.3283327,Height=0.0328}", "b", "wide"],
  ["ExpandCollapsePinAlignment", "Nevron.Diagram.NContentAlignment", "b"],
  ["ExpandedSize", "{Width=3.283327,Height=3.283327}", "b", "wide"],
  ["c", "Identification"],
  ["Id", "547", "b"],
  ["UniqueId", "5c38fc07-835a-4e00-aef0-3c26ab11", "b", "wide"],
];

/* diagram, drawn in screen coordinates through the viewBox */
const range = (from, to, step) => {
  const out = [];
  for (let v = from; v <= to; v += step) out.push(v);
  return out;
};

const Handle = ({ x, y, f = "#0f9a12" }) => <circle cx={x} cy={y} r="4.4" fill={f} stroke="#174a17" strokeWidth="0.8" />;
const Pin = ({ x, y }) => (
  <g>
    <circle cx={x} cy={y} r="4" fill="#fff" stroke="#222" />
    <path d={`M${x - 4} ${y}h8M${x} ${y - 4}v8`} stroke="#222" />
  </g>
);
const Cross = ({ x, y }) => (
  <path d={`M${x - 2.5} ${y - 2.5}l5 5M${x + 2.5} ${y - 2.5}l-5 5`} stroke="#5a6ee8" strokeWidth="1.2" fill="none" />
);

const Chair = ({ cx, cy, angle }) => (
  <g transform={`rotate(${angle} ${cx} ${cy})`}>
    <path
      d={`M${cx - 12.5} ${cy - 65.5}Q${cx} ${cy - 68.5} ${cx + 12.5} ${cy - 65.5}V${cy - 46}H${cx - 12.5}Z`}
      fill="url(#chairGrad)"
      stroke="#111"
      strokeWidth="2"
      strokeLinejoin="round"
    />
    <path d={`M${cx - 12.5} ${cy - 65.5}Q${cx} ${cy - 68.5} ${cx + 12.5} ${cy - 65.5}`} fill="none" stroke="#111" strokeWidth="3.2" />
  </g>
);

const RoundTable = ({ cx, cy }) => (
  <g>
    {[0, 45, 90, 135, 180, 225, 270, 315].map((a) => (
      <Chair key={a} cx={cx} cy={cy} angle={a} />
    ))}
    <circle cx={cx} cy={cy} r="43" fill="url(#tableGrad)" stroke="#111" strokeWidth="1.2" />
  </g>
);

const SofaPaths = {
  outer: "M468 226H600C610 226 616 240 616 255C616 270 612 283 604 283H470C460 283 454 270 454 254C454 240 458 226 468 226Z",
  cushions: "M520 283V240H498C490 240 485 246 485 255V283M520 240H563V283M563 240H590C596 240 598 248 598 256V283",
};

const Diagram = () => (
  <svg width="776" height="669" viewBox="277 188 776 669">
    <defs>
      <linearGradient id="tableGrad" x1="0.1" y1="1" x2="0.9" y2="0">
        <stop offset="0" stopColor="#c09233" />
        <stop offset="1" stopColor="#f2d492" />
      </linearGradient>
      <linearGradient id="chairGrad" x1="0" y1="0" x2="1" y2="1">
        <stop offset="0" stopColor="#ecca92" />
        <stop offset="1" stopColor="#6c4a24" />
      </linearGradient>
      <linearGradient id="sofaGrad" x1="0" y1="1" x2="1" y2="0">
        <stop offset="0" stopColor="#7a5429" />
        <stop offset="1" stopColor="#eccb94" />
      </linearGradient>
      <linearGradient id="cushGrad" x1="0" y1="0" x2="1" y2="1">
        <stop offset="0" stopColor="#e3c08a" />
        <stop offset="1" stopColor="#6c4a24" />
      </linearGradient>
    </defs>

    {range(321, 1053, 86.4).map((x) => <line key={x} x1={x} x2={x} y1="188" y2="857" stroke="#c8c8c8" strokeWidth="1.5" strokeDasharray="4 2" />)}
    {range(364.4, 1053, 86.4).map((x) => <line key={x} x1={x} x2={x} y1="188" y2="857" stroke="#777" strokeDasharray="1 1" />)}
    {range(230.7, 857, 86.4).map((y) => <line key={y} y1={y} y2={y} x1="277" x2="1053" stroke="#c8c8c8" strokeWidth="1.5" strokeDasharray="4 2" />)}
    {range(274, 857, 86.4).map((y) => <line key={y} y1={y} y2={y} x1="277" x2="1053" stroke="#777" strokeDasharray="1 1" />)}

    {[602, 765].map((cy) => [432, 588, 743, 897].map((cx) => <RoundTable key={`${cx}-${cy}`} cx={cx} cy={cy} />))}

    {/* sofa */}
    <path d={SofaPaths.outer} fill="url(#sofaGrad)" stroke="none" />
    <path d="M464 226C456 232 453 244 453 255C453 268 456 278 464 283" fill="none" stroke="#111" strokeWidth="1.8" />
    <path d="M484 283V252C484 244 490 240 498 240H590C596 240 598 248 598 256V283Z" fill="url(#cushGrad)" />
    <path d="M464 226H616M464 283H616" stroke="#3a6a3a" strokeDasharray="3 2" />
    <path d="M474 283C464 283 467 270 467 254C467 240 470 226 480 226H600C610 226 616 240 616 255C616 270 612 283 604 283H474Z" fill="none" stroke="#dc1408" strokeWidth="1.8" />
    <path d={SofaPaths.cushions} fill="none" stroke="#dc1408" strokeWidth="1.8" />
    <line x1="463" x2="463" y1="226" y2="283" stroke="#0f8a12" strokeDasharray="3 2" />
    <line x1="619" x2="619" y1="226" y2="283" stroke="#3a6a3a" strokeDasharray="3 2" />

    {/* armchair */}
    <path d="M420 293C404 293 393 298 393 306V345C393 352 402 358 420 358H463V293Z" fill="url(#cushGrad)" />
    <path d="M420 293C404 293 393 298 393 306V345C393 352 402 358 420 358" fill="none" stroke="#111" strokeWidth="1.8" />
    <path d="M463 300C455 295 440 293 430 293C415 293 407 300 407 310V340C407 352 418 356 430 356C440 356 455 354 463 349" fill="none" stroke="#dc1408" strokeWidth="1.8" />
    <path d="M463 310C445 310 430 310 423 312C420 313 420 318 420 325C420 335 421 338 426 339C438 340 450 338 463 341" fill="url(#cushGrad)" stroke="#dc1408" strokeWidth="1.8" />
    <path d="M407 289H463V360H407Z" fill="none" stroke="#3a6a3a" strokeDasharray="3 2" />

    {/* coffee table */}
    <rect x="493" y="303" width="70" height="57" fill="url(#tableGrad)" />
    <path d="M493 303V360H563" fill="none" stroke="#111" strokeWidth="1.8" />
    <path d="M507 303H563V360" fill="none" stroke="#a0602a" strokeDasharray="3 2" />
    <line x1="507" x2="507" y1="303" y2="360" stroke="#1a8a1a" strokeWidth="1.3" strokeDasharray="4 2" />

    {/* drag preview */}
    <g fill="#f7f7f7" fillOpacity="0.85" stroke="#1530e0" strokeWidth="1.5" strokeDasharray="4 2">
      <path d="M608 273H735C745 273 748 285 748 300C748 315 745 330 735 330H610C600 330 597 315 597 300C597 285 600 273 608 273Z" />
      <path d="M615 290C612 290 614 295 614 305V330H649V288ZM649 288H692V330H649ZM692 288H722C727 288 728 295 728 305C728 320 730 330 734 330H692Z" fillOpacity="0.6" />
      <path d="M537 352C537 343 550 340 565 340C582 340 593 343 593 350V395C593 402 580 404 565 404C550 404 537 402 537 395Z" />
      <path d="M593 355C580 358 560 358 551 356C549 365 549 375 552 378C565 380 580 378 593 390" fillOpacity="0.4" />
      <rect x="636" y="350" width="57" height="57" />
    </g>
    <path d="M607 283C605 290 607 320 611 330" stroke="#6a7cf0" strokeDasharray="3 2" fill="none" />
    <path d="M607 280H730C738 280 736 300 736 330" stroke="#7a8cf0" strokeDasharray="3 2" fill="none" />
    <path d="M545 352H593M545 352V392H593" stroke="#8b9bf0" strokeDasharray="3 2" fill="none" />
    <rect x="536.5" y="273.5" width="213" height="134" fill="none" stroke="#1530e0" strokeWidth="1.5" strokeDasharray="4 2" />

    {[[449, 254], [529, 224], [527, 283], [421, 289], [421, 360], [393, 324], [521, 302], [521, 361], [493, 331], [564, 337], [564, 360], [671, 273], [591, 302], [749, 302], [671, 330], [564, 407], [564, 371], [537, 371], [593, 371], [664, 350], [664, 379], [636, 379], [693, 379], [664, 407], [671, 302]].map(([x, y]) => (
      <Cross key={`${x}-${y}`} x={x} y={y} />
    ))}

    {[[463, 226], [541, 226], [619, 226], [463, 254], [619, 254], [463, 283], [541, 283], [407, 289], [435, 289], [463, 289], [407, 324], [463, 324], [407, 360], [435, 360], [463, 360]].map(([x, y]) => (
      <Handle key={`${x}-${y}`} x={x} y={y} />
    ))}
    {[[507, 303], [535, 303], [563, 303], [507, 331], [563, 331], [507, 360], [535, 360], [563, 360]].map(([x, y]) => (
      <Handle key={`p${x}-${y}`} x={x} y={y} f="#ff80ee" />
    ))}
    <circle cx="619" cy="283" r="4" fill="#a8a8a8" stroke="#888" />
    <circle cx="535" cy="273" r="4.5" fill="#7cc8f8" stroke="#c8e8f8" />
    <circle cx="541" cy="196" r="4.4" fill="#dc1408" stroke="#8a1008" />
    <circle cx="377" cy="324" r="4.4" fill="#dc1408" stroke="#8a1008" />
    <Pin x={541} y={254} />
    <Pin x={435} y={324} />
    <Pin x={535} y={331} />

    {/* shape running off the right edge */}
    <path d="M1060 258C1045 258 1033 264 1028 278C1026 286 1034 296 1042 304C1048 310 1054 316 1060 316Z" fill="#dc1010" stroke="#111" strokeWidth="1.8" />
    <path d="M1060 268C1050 268 1040 272 1038 282C1037 290 1048 296 1060 298" fill="none" stroke="#111" strokeWidth="1.6" />
    <path d="M1060 303C1050 303 1044 302 1039 297L1060 316Z" fill="#5a0c08" />
    <Cross x={1032} y={264} />
    <Cross x={1032} y={305} />
    <Cross x={1051} y={284} />
  </svg>
);

const WIN_BTN = {
  min: <path d="M1 7.5h8" stroke="#444" strokeWidth="1.6" />,
  max: <><rect x="1.5" y="1.5" width="9" height="9" fill="none" stroke="#444" /><path d="M1 2h10" stroke="#444" strokeWidth="2" /></>,
  close: <path d="M1.5 1.5l9 9M10.5 1.5l-9 9" stroke="#444" strokeWidth="1.8" />,
};

const App = () => (
  <Screen>
    <GlobalStyle />
    <Frame>
      <TitleBar>
        <svg width="16" height="16" viewBox="0 0 16 16">
          <rect x="0.5" y="0.5" width="15" height="15" fill="#eee" stroke="#bbb" />
          <rect x="6" y="2" width="8" height="6" fill="#f2b84a" />
          <rect x="1" y="6" width="5" height="7" fill="#d8341c" />
          <rect x="7" y="9" width="6" height="4" fill="#5a96dc" />
        </svg>
        <svg width="8" height="8" viewBox="0 0 8 8" style={{ marginLeft: 13 }}>
          <path d="M1 1.5h6M1 3.5h6l-3 3z" stroke="#555" fill="#555" />
        </svg>
        <WinButtons>
          {Object.keys(WIN_BTN).map((k) => (
            <WinButton key={k}>
              <svg width="12" height="12" viewBox="0 0 12 12">{WIN_BTN[k]}</svg>
            </WinButton>
          ))}
        </WinButtons>
      </TitleBar>
      <AppTab>
        <svg width="14" height="12" viewBox="0 0 14 12">
          <rect x="0.5" y="0.5" width="13" height="11" rx="1" fill="#fff" stroke="#fff" />
          <path d="M6.5 1v10" stroke="#0072c6" />
          <path d="M8 3.5h4M8 6h4M8 8.5h4" stroke="#0072c6" />
        </svg>
        <CaretBox $w={6} $c="#fff" />
      </AppTab>
      <ToolArea>
        <MenuBar>
          <Grip $w={6} />
          {MENU.map((m) => <span key={m}>{m}</span>)}
        </MenuBar>
        {TOOLBARS.map((row) => (
          <ToolRow key={row.bars[0][0]} $h={row.h} $gap={row.gap} $pad={row.pad}>
            {row.bars.map((items) => (
              <Toolbar key={items[0]}>
                <Grip $w={11} />
                {items.map(renderItem)}
                <Cap>
                  <svg width="8" height="7" viewBox="0 0 8 7">
                    <path d="M1 1h6M1 3h6L4 6.5z" stroke="#fff" fill="#111" />
                  </svg>
                </Cap>
              </Toolbar>
            ))}
          </ToolRow>
        ))}
      </ToolArea>
      <Main>
        <LeftPanel>
          <PanelHead>
            <PanelTitle>Floor Plan Shapes</PanelTitle>
            <Book size={20} />
            <Chevrons>«</Chevrons>
          </PanelHead>
          <ListWrap>
            <List>
              {SHAPES.map(([title, text, kind], i) => (
                <Item key={title}>
                  <Thumb><ThumbArt kind={kind} /></Thumb>
                  <ItemBody $sel={i === 0}>
                    <ItemTitle>{title}</ItemTitle>
                    <ItemText>{text}</ItemText>
                  </ItemBody>
                </Item>
              ))}
            </List>
            <VBar>
              <ArrowBtn><Tri $d="up" /></ArrowBtn>
              <VThumb $h={35} />
              <ArrowBtn $end><Tri $d="down" /></ArrowBtn>
            </VBar>
            <HBar>
              <ArrowBtn $w={17}><Tri $d="left" /></ArrowBtn>
              <HThumb $w={182} $ml={8} />
              <ArrowBtn $w={17} $endX><Tri $d="right" /></ArrowBtn>
            </HBar>
          </ListWrap>
          <Splitter />
          {NAV.map(([label, on]) => (
            <NavButton key={label} $on={on}><Book />{label}</NavButton>
          ))}
          <NavFoot>
            <svg width="10" height="12" viewBox="0 0 10 12">
              <path d="M1 1l3 2.5L1 6M5 1l3 2.5L5 6" stroke="#111" fill="none" />
              <path d="M1 8h8l-4 4z" fill="#111" />
            </svg>
          </NavFoot>
        </LeftPanel>
        <Center>
          <span />
          <TopRuler>
            {range(0, 45, 5).map((n) => (
              <TopCell key={n} $fill={n === 15 || n === 20 ? 100 : n === 25 ? 45 : 0}>
                {n}
                {n === 25 && <TopMark $at={3} />}
              </TopCell>
            ))}
          </TopRuler>
          <span />
          <SideRuler>
            {range(0, 35, 5).map((n) => (
              <SideCell key={n} $fill={n === 5 ? 100 : n === 10 ? 55 : 0}>
                {n}
                {n === 5 && <SideMark $at={43} />}
              </SideCell>
            ))}
          </SideRuler>
          <Canvas><Diagram /></Canvas>
          <BarV>
            <ArrowBtn $w={17}><Tri $d="up" /></ArrowBtn>
            <VThumb $h={410} />
            <ArrowBtn $w={17} $end><Tri $d="down" /></ArrowBtn>
          </BarV>
          <span />
          <BarH>
            <ArrowBtn $h={17}><Tri $d="left" /></ArrowBtn>
            <HThumb $w={476} />
            <ArrowBtn $h={17} $endX><Tri $d="right" /></ArrowBtn>
          </BarH>
          <span />
        </Center>
        <RightPanel>
          <Selector>
            <Combo>
              <svg width="18" height="18" viewBox="0 0 18 18">
                <circle cx="9" cy="3" r="2" fill="#e8a050" stroke="#333" />
                <path d="M9 5v11M5 7.5h8M1 11c1 4 5 5 8 5s7-1 8-5" stroke="#333" strokeWidth="1.5" fill="none" />
                <path d="M0 12l3-2 1 3zM18 12l-3-2-1 3z" fill="#333" />
              </svg>
              <ComboText>Selection Anchor</ComboText>
              <ComboArrow><CaretBox $w={8} /></ComboArrow>
            </Combo>
            <WarnBtn>
              <svg width="16" height="16" viewBox="0 0 16 16">
                <rect x="0.5" y="0.5" width="15" height="15" fill="#fffdf4" stroke="#111" />
                <rect x="6" y="3" width="4" height="6" fill="#f5c030" stroke="#111" />
                <rect x="6" y="11" width="4" height="2.5" fill="#f5c030" stroke="#111" />
              </svg>
            </WarnBtn>
          </Selector>
          <GridTools>
            <GridToolBtn $on>
              <svg width="18" height="18" viewBox="0 0 18 18">
                <rect x="0.5" y="2.5" width="5" height="5" fill="#fff" stroke="#333" />
                <rect x="0.5" y="10.5" width="5" height="5" fill="#fff" stroke="#333" />
                <path d="M2 5h2M3 4v2M2 13h2M3 12v2" stroke="#111" />
                <path d="M8 3h9M8 5.5h9M8 8h6M8 11h9M8 13.5h6M8 16h6" stroke="#6c7c8c" />
              </svg>
            </GridToolBtn>
            <GridToolBtn>
              <svg width="18" height="18" viewBox="0 0 18 18">
                <text x="0" y="8.5" fontSize="10" fontWeight="bold" fontFamily="Liberation Serif" fill="#3556b0">A</text>
                <text x="0.5" y="17.5" fontSize="10" fontWeight="bold" fontFamily="Liberation Serif" fill="#8a5a1c">Z</text>
                <path d="M13 1v14M10.5 12l2.5 4 2.5-4z" stroke="#111" fill="#111" />
              </svg>
            </GridToolBtn>
            <ToolSep />
            <GridToolBtn $off>
              <svg width="18" height="18" viewBox="0 0 18 18">
                <rect x="1.5" y="2.5" width="15" height="13" fill="#ddd" stroke="#888" />
                <path d="M2 5.5h14M4 8.5h10v4H4z" stroke="#888" fill="none" />
              </svg>
            </GridToolBtn>
          </GridTools>
          <PropGrid>
            <PropRows>
              {PROPS.map((p) =>
                p[0] === "c" ? (
                  <CatRow key={p[1]}>
                    <Gutter>
                      <svg width="8" height="8" viewBox="0 0 8 8"><path d="M7 1v6H1z" fill="none" stroke="#555" /></svg>
                    </Gutter>
                    <CatLabel>{p[1]}</CatLabel>
                  </CatRow>
                ) : (
                  <PropRow key={p[0]}>
                    <Gutter>
                      {p[3] === "exp" && (
                        <svg width="7" height="10" viewBox="0 0 7 10"><path d="M1 1l5 4-5 4z" fill="none" stroke="#555" /></svg>
                      )}
                    </Gutter>
                    <PropName $sel={p[3] === "sel"}>{p[0]}</PropName>
                    <PropValue $b={p[2] === "b"} $wide={p[3] === "wide"}>{p[1]}</PropValue>
                  </PropRow>
                )
              )}
            </PropRows>
            <GridScroll>
              <ChevBtn>
                <svg width="9" height="6" viewBox="0 0 9 6"><path d="M1 5l3.5-3.5L8 5" stroke="#555" fill="none" /></svg>
              </ChevBtn>
              <GridGrip />
              <ChevBtn $end>
                <svg width="9" height="6" viewBox="0 0 9 6"><path d="M1 1l3.5 3.5L8 1" stroke="#555" fill="none" /></svg>
              </ChevBtn>
            </GridScroll>
          </PropGrid>
          <HelpPane>
            <HelpTitle>Name</HelpTitle>
            <div>User defined name of the element</div>
          </HelpPane>
        </RightPanel>
      </Main>
    </Frame>
  </Screen>
);

export default App;
